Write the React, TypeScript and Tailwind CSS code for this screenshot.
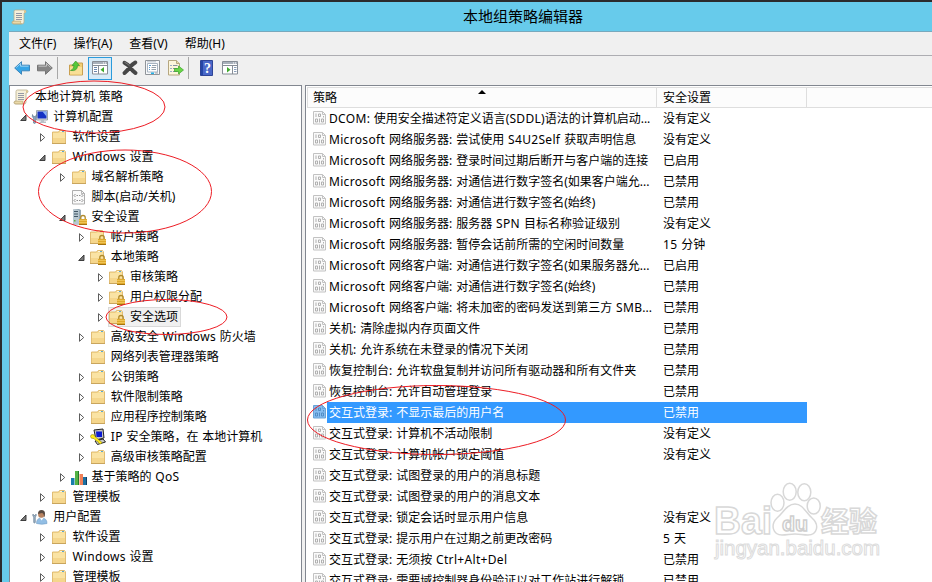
import React from "react";

type IconName =
  | "scroll"
  | "computer"
  | "folder"
  | "script"
  | "server"
  | "locked"
  | "ipsec"
  | "qos"
  | "user";

type Node = {
  label: string;
  level: number;
  icon: IconName;
  arrow?: "open" | "closed";
  selected?: boolean;
};

const tree: Node[] = [
  { label: "本地计算机 策略", level: 0, icon: "scroll" },
  { label: "计算机配置", level: 1, icon: "computer", arrow: "open" },
  { label: "软件设置", level: 2, icon: "folder", arrow: "closed" },
  { label: "Windows 设置", level: 2, icon: "folder", arrow: "open" },
  { label: "域名解析策略", level: 3, icon: "folder", arrow: "closed" },
  { label: "脚本(启动/关机)", level: 3, icon: "script" },
  { label: "安全设置", level: 3, icon: "server", arrow: "open" },
  { label: "帐户策略", level: 4, icon: "locked", arrow: "closed" },
  { label: "本地策略", level: 4, icon: "locked", arrow: "open" },
  { label: "审核策略", level: 5, icon: "locked", arrow: "closed" },
  { label: "用户权限分配", level: 5, icon: "locked", arrow: "closed" },
  { label: "安全选项", level: 5, icon: "locked", arrow: "closed", selected: true },
  { label: "高级安全 Windows 防火墙", level: 4, icon: "folder", arrow: "closed" },
  { label: "网络列表管理器策略", level: 4, icon: "folder" },
  { label: "公钥策略", level: 4, icon: "folder", arrow: "closed" },
  { label: "软件限制策略", level: 4, icon: "folder", arrow: "closed" },
  { label: "应用程序控制策略", level: 4, icon: "folder", arrow: "closed" },
  { label: "IP 安全策略，在 本地计算机", level: 4, icon: "ipsec", arrow: "closed" },
  { label: "高级审核策略配置", level: 4, icon: "folder", arrow: "closed" },
  { label: "基于策略的 QoS", level: 3, icon: "qos", arrow: "closed" },
  { label: "管理模板", level: 2, icon: "folder", arrow: "closed" },
  { label: "用户配置", level: 1, icon: "user", arrow: "open" },
  { label: "软件设置", level: 2, icon: "folder", arrow: "closed" },
  { label: "Windows 设置", level: 2, icon: "folder", arrow: "closed" },
  { label: "管理模板", level: 2, icon: "folder", arrow: "closed" },
];

const policies: [string, string][] = [
  ["DCOM: 使用安全描述符定义语言(SDDL)语法的计算机启动...", "没有定义"],
  ["Microsoft 网络服务器: 尝试使用 S4U2Self 获取声明信息", "没有定义"],
  ["Microsoft 网络服务器: 登录时间过期后断开与客户端的连接", "已启用"],
  ["Microsoft 网络服务器: 对通信进行数字签名(如果客户端允...", "已禁用"],
  ["Microsoft 网络服务器: 对通信进行数字签名(始终)", "已禁用"],
  ["Microsoft 网络服务器: 服务器 SPN 目标名称验证级别", "没有定义"],
  ["Microsoft 网络服务器: 暂停会话前所需的空闲时间数量", "15 分钟"],
  ["Microsoft 网络客户端: 对通信进行数字签名(如果服务器允...", "已启用"],
  ["Microsoft 网络客户端: 对通信进行数字签名(始终)", "已禁用"],
  ["Microsoft 网络客户端: 将未加密的密码发送到第三方 SMB...", "已禁用"],
  ["关机: 清除虚拟内存页面文件", "已禁用"],
  ["关机: 允许系统在未登录的情况下关闭", "已禁用"],
  ["恢复控制台: 允许软盘复制并访问所有驱动器和所有文件夹", "已禁用"],
  ["恢复控制台: 允许自动管理登录", "已禁用"],
  ["交互式登录: 不显示最后的用户名", "已禁用"],
  ["交互式登录: 计算机不活动限制", "没有定义"],
  ["交互式登录: 计算机帐户锁定阈值", "没有定义"],
  ["交互式登录: 试图登录的用户的消息标题", ""],
  ["交互式登录: 试图登录的用户的消息文本", ""],
  ["交互式登录: 锁定会话时显示用户信息", "没有定义"],
  ["交互式登录: 提示用户在过期之前更改密码", "5 天"],
  ["交互式登录: 无须按 Ctrl+Alt+Del", "已禁用"],
  ["交互式登录: 需要域控制器身份验证以对工作站进行解锁", "已禁用"],
];

const Svg = ({ children }: { children: React.ReactNode }) => (
  <svg width="16" height="16" viewBox="0 0 16 16" className="block shrink-0 overflow-visible">
    {children}
  </svg>
);

const ScrollIcon = () => (
  <Svg>
    <path d="M3 2.500q0-1.500 1.500-1.500h9q1.500 0 1.500 1.500t-2 1.500v9q0 2-2 2h-8.500q-1.500 0-1.500-1.500t2-1.500z" fill="#f6f0da" stroke="#b8ad8c" strokeWidth="0.8" />
    <path d="M13 1.300q1.800 0 1.800 1.200t-1.800 1.300z" fill="#d9c28a" />
    <path d="M1.300 13.500q0-1.300 1.500-1.300h7q-.8 1.500.6 2.600h-7.500q-1.500 0-1.600-1.300z" fill="#ead9a8" stroke="#b39d68" strokeWidth="0.6" />
    <path d="M5 4.500h6M5 6.500h6M5 8.500h6M5 10.500h6" stroke="#9499a5" />
  </Svg>
);

const FolderShape = () => (
  <>
    <path d="M1.500 3h6l1-1.500h5l1 1.500v11h-13z" fill="#f8dd94" stroke="#dcb669" strokeWidth="0.9" />
    <path d="M9 2.500h4.500" stroke="#fdf5dc" />
    <path d="M11 2h2v1h-2z" fill="#5aa7cf" />
    <path d="M2 4h12v5h-12z" fill="#fae3a4" />
    <path d="M2 9h12v5h-12z" fill="#f5d68c" />
    <path d="M1 14.500h14" stroke="#c9a55d" />
  </>
);

const Padlock = () => (
  <>
    <path d="M9.800 10.500v-2q0-2 2.200-2t2.200 2v2" fill="none" stroke="#b08a2c" strokeWidth="1.300" />
    <path d="M8 10h8v6h-8z" fill="#dfa92e" />
    <path d="M8 11.500h8M8 13.500h8" stroke="#f1cc60" strokeWidth="0.8" />
    <path d="M8 15.500h8" stroke="#a4730f" />
  </>
);

const icons: Record<IconName, React.ReactNode> = {
  scroll: <ScrollIcon />,
  folder: (
    <Svg>
      <FolderShape />
    </Svg>
  ),
  locked: (
    <Svg>
      <g transform="translate(-1 0)">
        <FolderShape />
      </g>
      <Padlock />
    </Svg>
  ),
  computer: (
    <Svg>
      <path d="M4.500 1.500h11v9.500h-11z" fill="#d9dde0" stroke="#8d969c" strokeWidth="0.8" />
      <path d="M5.500 2.500h9v7h-9z" fill="#1531c4" />
      <path d="M10.500 2.500h4v5z" fill="#8db4f5" />
      <path d="M9 11h3v1.500h2v1.500h-6.500v-1.500h1.500z" fill="#b9c1c8" />
      <path d="M.5 5.500q-.8 2.500 1 3.500v5q1 1 2 0v-5q2-1 1-3.500l-1 2h-2z" fill="#8ba5be" stroke="#5b748c" strokeWidth="0.6" />
    </Svg>
  ),
  script: (
    <Svg>
      <path d="M1.500 1.500h9l3 3v10.500h-12z" fill="#fafafa" stroke="#a5a5a5" strokeWidth="0.9" />
      <path d="M10.500 1.500v3h3" fill="none" stroke="#a5a5a5" strokeWidth="0.8" />
      <path d="M4.500 5l-1.500 1.500 1.500 1.500M10.500 5l1.500 1.500-1.500 1.500M5.500 6.500h1.500M8 6.500h1.500M4.500 10l-1.500 1.500 1.500 1.500M10.500 10l1.500 1.500-1.500 1.500M5.500 11.500h1.500M8 11.500h1.500" fill="none" stroke="#757575" strokeWidth="0.8" />
    </Svg>
  ),
  server: (
    <Svg>
      <path d="M2 .5l6-.5 2 1v13l-2 1.500h-6z" fill="#94a7b4" />
      <path d="M2 1h6v14.500h-6z" fill="#b7c7d1" />
      <path d="M3 2.500h4M3 5h4M3 7.500h4" stroke="#415665" />
      <path d="M3 11h1.500v1.500h-1.500z" fill="#65b13a" />
      <Padlock />
    </Svg>
  ),
  ipsec: (
    <Svg>
      <path d="M4 1l9-1 1 9-8 2z" fill="#c4c4c4" stroke="#222" />
      <path d="M6 2.500h6v5.500h-5.500z" fill="#0b1ad2" />
      <path d="M5 12l8-2 2.500 3-8 2.500z" fill="#c9c9c9" stroke="#222" />
      <path d="M.5 7.500q0-2 2-2 2 0 2.200 1.700l7.300 6.300-1.500 1.500-2-1-.5-1.500-1.800-.5-2.200-2.500q-3.500.5-3.500-2z" fill="#ffec1c" stroke="#817700" strokeWidth="0.5" />
    </Svg>
  ),
  qos: (
    <Svg>
      <path d="M0 9h3.500v7h-3.500z" fill="#177dac" />
      <path d="M4 2h4v14h-4z" fill="#53b345" />
      <path d="M7 2h1v14h-1z" fill="#247a28" />
      <path d="M8.500 5h3.500v11h-3.500z" fill="#f08058" />
      <path d="M12 8h4v8h-4z" fill="#1c70a0" />
      <path d="M15 8h1v8h-1z" fill="#0c3d66" />
    </Svg>
  ),
  user: (
    <Svg>
      <path d="M4.500 14.500q0-5.500 5-5.500 5.500 0 5.500 5.500-5 1.500-10.500 0z" fill="#92bee4" stroke="#6d9cc6" strokeWidth="0.6" />
      <path d="M8 9l1.500 2.500 2-2.500z" fill="#fff" />
      <circle cx="9.300" cy="5.500" r="3.200" fill="#b98462" />
      <path d="M6 5q0-4 3.500-4t3.500 3.500q0 3-1 4 .3-4-2-4.500-2.500.5-4 1z" fill="#574a42" />
      <path d="M1 5q-.8 2 .7 3v5.500q.8 1 1.600 0v-5.500q1.500-1 .7-3l-.8 1.500h-1.400z" fill="#9ab0c4" stroke="#62798f" strokeWidth="0.6" />
    </Svg>
  ),
};

const Arrow = ({ kind }: { kind?: "open" | "closed" }) => (
  <svg width="9" height="11" viewBox="0 0 9 11" className="block shrink-0">
    {kind === "open" && <path d="M6 3v5.500h-5.300z" fill="#7a7a7a" stroke="#2f2f2f" strokeWidth="0.9" />}
    {kind === "closed" && <path d="M1.500 1.700l4.200 3.800-4.200 3.800z" fill="#fff" stroke="#4a4a4a" strokeWidth="0.9" />}
  </svg>
);

// Latin runs are set a little wider than the CJK text around them
const Label = ({ text }: { text: string }) => (
  <>
    {text.split(/([A-Za-z0-9+]+)/).map((part, i) =>
      i % 2 ? (
        <span key={i} className="tracking-[0.32px]">
          {part}
        </span>
      ) : (
        part
      )
    )}
  </>
);

const TreeRow = ({ node }: { node: Node }) => (
  <div className="flex h-5 items-center [word-spacing:0.6px]">
    <div className="shrink-0" style={{ width: node.level ? node.level * 19.2 - 11 : 1 }} />
    {node.level > 0 && <Arrow kind={node.arrow} />}
    {node.selected ? (
      <div className="ml-0.5 flex h-5 items-center border border-[#d9d9d9] bg-[#f0f0f0] pr-[2px] leading-none whitespace-nowrap">
        {icons[node.icon]}
        <span className="ml-[5px]">{node.label}</span>
      </div>
    ) : (
      <>
        <div className={node.level > 0 ? "ml-[3px]" : ""}>{icons[node.icon]}</div>
        <span className={`leading-none whitespace-nowrap ${node.level > 0 ? "ml-[5px]" : "ml-[6px]"}`}>
          <Label text={node.label} />
        </span>
      </>
    )}
  </div>
);

const PolicyIcon = ({ selected }: { selected: boolean }) => (
  <svg width="14" height="15" viewBox="0 0 14 15" className="block shrink-0">
    <path d="M.5.5h9l3 3v9.500h-12z" fill={selected ? "#86bdf0" : "#fafafa"} stroke={selected ? "#6aa3d8" : "#c2c2c2"} />
    <path d="M9.500.5v3h3" fill="none" stroke={selected ? "#6aa3d8" : "#c2c2c2"} />
    <path d="M3 2.500v3.500M5.500 3h2v2.500h-2zM2.500 8h2v3h-2zM6.500 7.500v4M8.500 8h2v3h-2zM10.500 5v1.500" fill="none" stroke={selected ? "#4d88c0" : "#a8a8a8"} strokeWidth="0.9" />
  </svg>
);

const PolicyRow = ({ name, value, selected }: { name: string; value: string; selected: boolean }) => (
  <div className="flex h-[21px] shrink-0 items-center pl-[7px] [word-spacing:0.8px]">
    <PolicyIcon selected={selected} />
    <div className={`flex h-[21px] w-[480px] items-center leading-none whitespace-nowrap ${selected ? "bg-[#3399ff] text-white" : ""}`}>
      <span className="w-[336px] pl-[2px]">
        <Label text={name} />
      </span>
      <span>
        <Label text={value} />
      </span>
    </div>
  </div>
);

const WindowPane = ({ flip }: { flip?: boolean }) => (
  <Svg>
    <path d="M.5 1.500h15v12.500h-15z" fill="#fff" stroke="#868d96" />
    <path d="M1 2h14v2h-14z" fill="#a9b1bb" />
    <path d="M11 3h1M13 3h1" stroke="#fff" />
    <path d="M1 5.500h14" stroke="#868d96" />
    {flip ? (
      <>
        <path d="M10.500 6v8" stroke="#868d96" />
        <path d="M12 7.500h2.500M12 9.500h2.500M12 11.500h2.500" stroke="#8ba0ba" />
        <path d="M5 7l3.500 2.700-3.500 2.700z" fill="#3faa2c" />
      </>
    ) : (
      <>
        <path d="M6.500 6v8" stroke="#868d96" />
        <path d="M2 7.500h3M2 9.500h3M2 11.500h3" stroke="#6a87ad" />
        <path d="M12 7l-3.500 2.700 3.500 2.700z" fill="#3faa2c" />
      </>
    )}
  </Svg>
);

const ArrowIcon = ({ fill, stroke, flip }: { fill: string; stroke: string; flip?: boolean }) => (
  <svg width="16" height="16" viewBox="0 0 16 16" className={`block ${flip ? "-scale-x-100" : ""}`}>
    <path d="M.7 8l6.800-6.300v3.500h8v5.600h-8v3.500z" fill={fill} stroke={stroke} />
    <path d="M2.300 7.500l4.200-4v2.700h8" fill="none" stroke="#fff" strokeOpacity=".5" />
  </svg>
);

const Toolbar = () => (
  <div className="flex h-[29px] items-start bg-[#f0f0f0] pl-[5px]">
    <div className="flex h-6 items-center">
      <div className="mr-[7px]">
        <ArrowIcon fill="#36a5e6" stroke="#3c86bb" />
      </div>
      <ArrowIcon fill="#858585" stroke="#747474" flip />
      <div className="mx-[4px] h-[22px] w-px bg-[#a8a8a8]" />
      <div className="ml-[6px]">
        <Svg>
          <path d="M1.500 5h5l1-2h7v12h-13z" fill="#f2cd72" stroke="#c9a050" />
          <path d="M2 7h12v7.500h-12z" fill="#f8df97" />
          <path d="M2.500 10.500q3.500-1 3.500-5h-2l3.700-4.500 3.800 4.500h-2q0 6-7 5z" fill="#55c83a" stroke="#3a9a2c" strokeWidth="0.7" />
        </Svg>
      </div>
      <div className="ml-[4px] flex h-[23px] w-[24px] items-center justify-center border border-[#2b9bdc] bg-[#d6eaf7]">
        <WindowPane />
      </div>
      <div className="ml-[10px]">
        <Svg>
          <path d="M2.500 2.800q3 1.200 5.500 4.200 2.500-3 5.300-4.500M2.500 13q2.500-2 5.500-6 2.500 4.200 5.500 6" fill="none" stroke="#474747" strokeWidth="4" strokeLinejoin="round" strokeLinecap="round" />
          <path d="M2.500 2.300q2.500.8 5 3.500" fill="none" stroke="#858585" />
        </Svg>
      </div>
      <div className="ml-[7px]">
        <Svg>
          <path d="M.5.500h14v14h-14z" fill="#f7f8fa" stroke="#90959a" />
          <path d="M2.500 3.500h10v8.500h-10z" fill="#fff" stroke="#a8b4c1" />
          <path d="M2 1.800h9" stroke="#bac2cb" />
          <path d="M4 5.500h2M4 7.500h1M4 9.500h1" stroke="#5a9cd0" />
          <path d="M7 5.500h4.500M6.500 7.500h4.500M6.500 9.500h4.500" stroke="#95a0ab" />
          <path d="M6 12.500h3v1.500h-3z" fill="#26b2e8" />
          <path d="M10 13h3" stroke="#a0a6ad" />
        </Svg>
      </div>
      <div className="ml-[7px]">
        <Svg>
          <path d="M.5.500h8l3 3v11.500h-11z" fill="#fdf6dc" stroke="#b6a780" />
          <path d="M8.500.500v3h3" fill="#e6d8ac" stroke="#b6a780" />
          <path d="M2.500 5.500h1M2.500 8.500h1M2.500 11.500h1" stroke="#3a67ad" />
          <path d="M5 5.500h4.500M5 8.500h4M5 11.500h4.500" stroke="#84909f" />
          <path d="M6.500 8.500h4v-2.500l5 4-5 4v-2.500h-4z" fill="#6ad648" stroke="#39a526" strokeWidth="0.7" />
        </Svg>
      </div>
      <div className="mx-[4px] h-[22px] w-px bg-[#a8a8a8]" />
      <div className="ml-[6px]">
        <Svg>
          <path d="M1.500.500h12v15h-12z" fill="#4a68c8" stroke="#2f4496" />
          <path d="M2 1h2v14h-2z" fill="#2546a6" />
          <text x="8.500" y="13" textAnchor="middle" fill="#fff" className="font-['Liberation_Serif'] text-[14px] font-bold">?</text>
        </Svg>
      </div>
      <div className="ml-[7px]">
        <WindowPane flip />
      </div>
    </div>
  </div>
);

const Watermark = () => (
  <svg width="180" height="90" viewBox="0 0 180 90" className="pointer-events-none absolute top-[476px] left-[708px]">
    <g fill="#fff" stroke="#d8d8d8" strokeWidth="1.500">
      <text x="4" y="56" textLength="58" lengthAdjust="spacingAndGlyphs" className="font-['Liberation_Sans'] text-[38px] font-bold">Bai</text>
      <ellipse cx="67.500" cy="24.700" rx="6.500" ry="8.500" />
      <ellipse cx="79.700" cy="13.700" rx="6.500" ry="8.500" />
      <ellipse cx="94.300" cy="14.300" rx="6.500" ry="8.500" />
      <ellipse cx="103.700" cy="28" rx="6.500" ry="8" />
      <path d="M85 26c8 0 11 9 17 14 8 7 5 17-4 17-5 0-8-1-13-1s-8 1-13 1c-9 0-12-10-5-17 6-5 10-14 18-14z" />
      <text x="72" y="53" textLength="26" lengthAdjust="spacingAndGlyphs" stroke="#cfcfcf" className="font-['Liberation_Sans'] text-[21px] font-bold">du</text>
      <text x="111" y="54" textLength="56" className="font-['Noto_Sans_CJK_SC'] text-[28px] font-bold">经验</text>
    </g>
    <text x="5" y="77" textLength="165" lengthAdjust="spacingAndGlyphs" fill="#fff" stroke="#dcdcdc" strokeWidth="1" className="font-['Liberation_Sans'] text-[20px]">
      jingyan.baidu.com
    </text>
  </svg>
);

const App = () => {
  return (
    <div className="relative flex h-[582px] w-[932px] overflow-hidden border-t-2 border-l-2 border-[#2b2b2d] bg-[#67cbeb] font-['Noto_Sans','Noto_Sans_CJK_SC',sans-serif] text-[12px] text-black">
      <div className="flex min-w-0 flex-1 flex-col pl-[7px]">
        <div className="flex h-[29px] shrink-0 items-center pl-0.5">
          <ScrollIcon />
          <span className="ml-[436px] text-[15px] leading-none">本地组策略编辑器</span>
        </div>
        <div className="flex h-[25px] shrink-0 items-center gap-[17px] border-t border-b border-t-[#78a9bd] border-b-[#adadb2] bg-[#f0f0f0] pl-[10px] leading-none">
          <span>文件(F)</span>
          <span>操作(A)</span>
          <span>查看(V)</span>
          <span>帮助(H)</span>
        </div>
        <Toolbar />
        <div className="flex min-h-0 flex-1 gap-[3px] bg-[#f0f0f0]">
          <div className="w-[293px] shrink-0 overflow-hidden border-t border-r border-l border-[#828790] bg-white pt-px pl-[2px]">
            {tree.map((node, i) => (
              <TreeRow key={i} node={node} />
            ))}
          </div>
          <div className="flex min-w-0 flex-1 flex-col overflow-hidden border-t border-l border-[#828790] bg-white pt-px">
            <div className="ml-px flex h-[21px] shrink-0 items-center border-t border-b border-l border-[#dedede] bg-[#fcfcfc] leading-none">
              <div className="relative flex h-full w-[349px] items-center border-r border-[#dedede] pt-px pl-[5px]">
                策略
                <svg width="8" height="4" className="absolute top-[2px] left-[170px]">
                  <path d="M0 4l4-4 4 4z" />
                </svg>
              </div>
              <div className="flex h-full w-[150px] items-center border-r border-[#dedede] pt-px pl-[6px]">安全设置</div>
            </div>
            {policies.map(([name, value], i) => (
              <PolicyRow key={i} name={name} value={value} selected={i === 14} />
            ))}
          </div>
        </div>
      </div>
      <Watermark />
      <svg width="930" height="580" viewBox="2 2 930 580" fill="none" stroke="#ed1c24" className="pointer-events-none absolute top-0 left-0">
        <ellipse cx="94" cy="107" rx="71" ry="26" />
        <ellipse cx="125" cy="191.500" rx="86.500" ry="41.500" />
        <ellipse cx="166.500" cy="317" rx="60.500" ry="17.500" />
        <ellipse cx="436.500" cy="420" rx="129" ry="34.500" />
      </svg>
    </div>
  );
};

export default App;
